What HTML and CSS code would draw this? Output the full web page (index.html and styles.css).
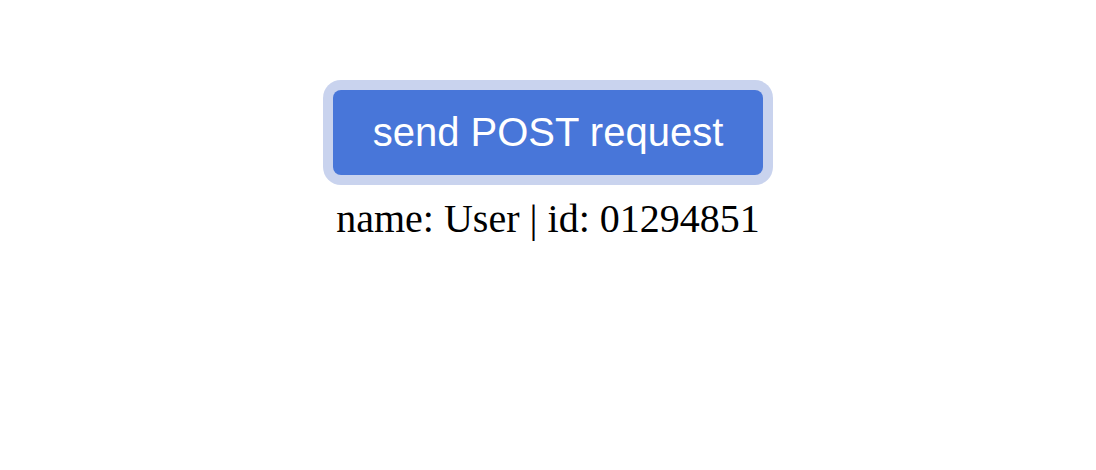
FILE: index.html
```html
<!DOCTYPE html>
<html>
<head>
<meta charset="utf-8">
<link rel="stylesheet" href="styles.css">
</head>
<body>
<main class="page">
  <button class="send-btn">send POST request</button>
  <p class="result">name: User | id: 01294851</p>
</main>
</body>
</html>
```
FILE: styles.css
```css
html, body {
  margin: 0;
  padding: 0;
  background: #ffffff;
}
.page {
  display: flex;
  flex-direction: column;
  align-items: center;
  padding-top: 90px;
}
.send-btn {
  font-family: "Liberation Sans", Arial, sans-serif;
  font-size: 40px;
  color: #ffffff;
  background: #4876d9;
  border: none;
  border-radius: 8px;
  width: 430px;
  height: 85px;
  padding: 0;
  box-shadow: 0 0 0 10px #c9d3ee;
  cursor: pointer;
}
.result {
  font-family: "Liberation Serif", "Times New Roman", serif;
  font-size: 40px;
  color: #000000;
  margin: 20px 0 0 0;
}
```
